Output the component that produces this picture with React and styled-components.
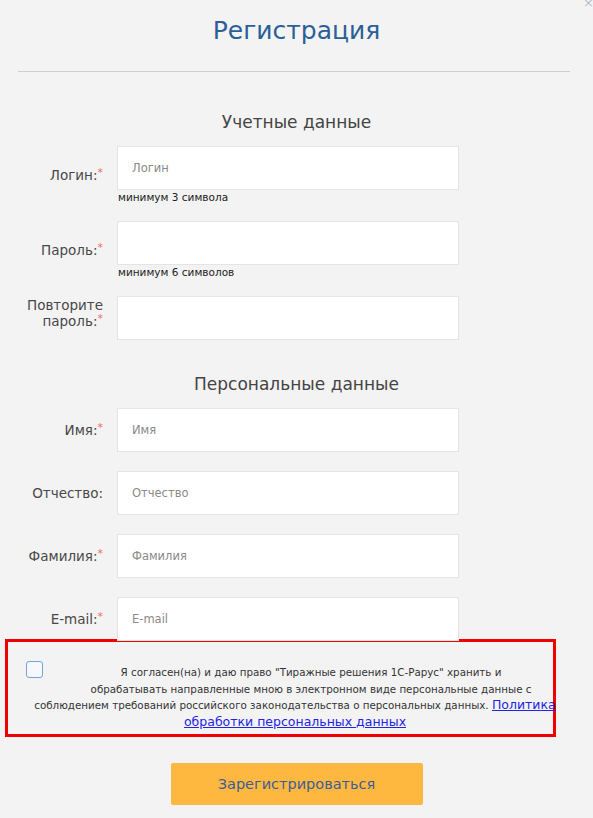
import React from "react";
import styled, { createGlobalStyle } from "styled-components";

const GlobalStyle = createGlobalStyle`
  html, body {
    margin: 0;
    padding: 0;
    background: #f3f3f3;
  }
  body {
    font-family: "DejaVu Sans", "Liberation Sans", sans-serif;
  }
`

const Page = styled.div`
  position: relative;
  width: 593px;
  min-height: 818px;
  background: #f3f3f3;
  box-sizing: border-box;
  padding-top: 16px;
`

const Close = styled.span`
  position: absolute;
  top: -4px;
  right: -1px;
  font-size: 13px;
  color: #b8c2cc;
  line-height: 1;
`

const Title = styled.h1`
  margin: 0;
  text-align: center;
  font-weight: normal;
  font-size: 25px;
  line-height: 30px;
  color: #2c5f96;
`

const Divider = styled.hr`
  margin: 25px 23px 0 18px;
  border: 0;
  border-top: 1px solid #cfcfcf;
  height: 0;
`

const SectionTitle = styled.h2`
  margin: ${p => p.$top}px 0 13px;
  text-align: center;
  font-weight: normal;
  font-size: 17px;
  line-height: 22px;
  color: #444;
`

const Row = styled.div`
  display: grid;
  grid-template-columns: 103px 342px;
  column-gap: 14px;
  margin-bottom: ${p => p.$gap}px;
`

const Label = styled.label`
  align-self: center;
  text-align: right;
  font-size: 13.5px;
  line-height: 16px;
  color: #484848;
  margin-top: ${p => p.$shift || 0}px;
`

const Star = styled.span`
  color: #f26a6a;
  font-size: 11px;
  line-height: 0;
  vertical-align: 4px;
`

const Field = styled.div`
  display: flex;
  flex-direction: column;
`

const Input = styled.input`
  box-sizing: border-box;
  width: 342px;
  height: 44px;
  border: 1px solid #e4e4e4;
  background: #fff;
  padding: 0 14px;
  font-family: inherit;
  font-size: 11.5px;
  color: #333;
  outline: none;
  &::placeholder {
    color: #8a8a8a;
  }
`

const Hint = styled.div`
  font-size: 10.5px;
  line-height: 14px;
  color: #222;
  padding-left: 1px;
`

const Consent = styled.div`
  box-sizing: border-box;
  width: 551px;
  height: 98px;
  margin: -2px 0 0 5px;
  border: 3px solid #f00000;
  padding: 22px 0 0 22px;
`

const CheckBox = styled.span`
  float: left;
  box-sizing: border-box;
  width: 17px;
  height: 17px;
  margin: -3px 19px 16px -4px;
  border: 1.5px solid #7aa0dc;
  border-radius: 3px;
  background: #f6f8fc;
`

const ConsentText = styled.p`
  margin: 0 -7px 0 0;
  text-align: center;
  font-size: 10.3px;
  line-height: 16.7px;
  color: #333;
  white-space: nowrap;
`

const PolicyLink = styled.a`
  color: #2323e6;
  font-size: 12.5px;
  text-decoration: underline;
`

const Footer = styled.div`
  display: flex;
  justify-content: center;
  padding: 26px 0 0 0;
`

const SubmitButton = styled.button`
  width: 252px;
  height: 42px;
  border: 0;
  border-radius: 2px;
  background: #ffb83f;
  color: #3c5d99;
  font-family: inherit;
  font-size: 14.5px;
  cursor: pointer;
`

const accountFields = [
  { label: "Логин:", placeholder: "Логин", hint: "минимум 3 символа", gap: 17 },
  { label: "Пароль:", placeholder: "", hint: "минимум 6 символов", gap: 17 },
  { label: "Повторите пароль:", placeholder: "", gap: 0, shift: -10 },
]

const personalFields = [
  { label: "Имя:", placeholder: "Имя", required: true, gap: 19 },
  { label: "Отчество:", placeholder: "Отчество", gap: 19 },
  { label: "Фамилия:", placeholder: "Фамилия", required: true, gap: 19 },
  { label: "E-mail:", placeholder: "E-mail", required: true, gap: 0 },
]

const FormRow = ({ f, required }) => (
  <Row $gap={f.gap}>
    <Label $shift={f.shift}>
      {f.label}
      {required && <Star>*</Star>}
    </Label>
    <Field>
      <Input type="text" placeholder={f.placeholder} />
      {f.hint && <Hint>{f.hint}</Hint>}
    </Field>
  </Row>
)

export default function App() {
  return (
    <Page>
      <GlobalStyle />
      <Close>×</Close>
      <Title>Регистрация</Title>
      <Divider />

      <SectionTitle $top={39}>Учетные данные</SectionTitle>
      {accountFields.map(f => (
        <FormRow key={f.label} f={f} required />
      ))}

      <SectionTitle $top={33}>Персональные данные</SectionTitle>
      {personalFields.map(f => (
        <FormRow key={f.label} f={f} required={f.required} />
      ))}

      <Consent>
        <CheckBox />
        <ConsentText>
          Я согласен(на) и даю право "Тиражные решения 1С-Рарус" хранить и<br />
          обрабатывать направленные мною в электронном виде персональные данные с<br />
          соблюдением требований российского законодательства о персональных данных. <PolicyLink href="#">Политика</PolicyLink><br />
          <PolicyLink href="#">обработки персональных данных</PolicyLink>
        </ConsentText>
      </Consent>

      <Footer>
        <SubmitButton>Зарегистрироваться</SubmitButton>
      </Footer>
    </Page>
  )
}
